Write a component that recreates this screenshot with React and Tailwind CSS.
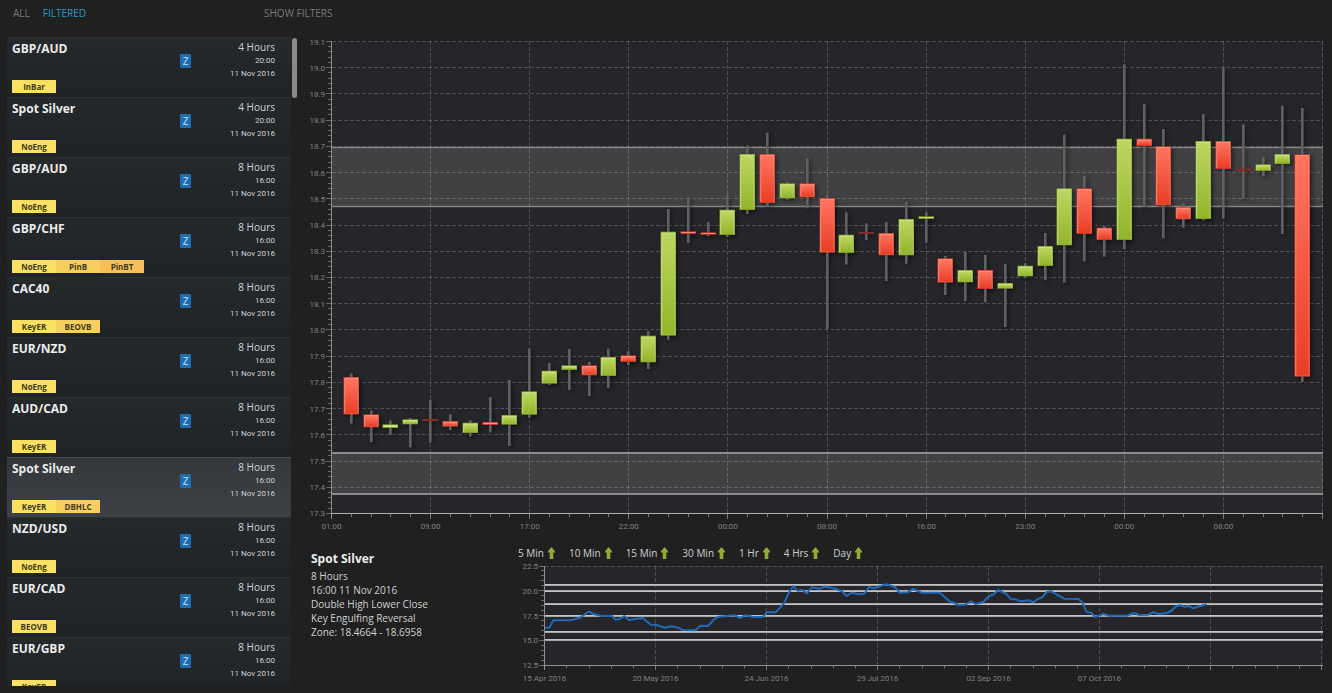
import React, { useState } from "react";

const SIGNALS = [
  { pair: "GBP/AUD", frame: "4 Hours", time: "20:00", tags: ["InBar"] },
  { pair: "Spot Silver", frame: "4 Hours", time: "20:00", tags: ["NoEng"] },
  { pair: "GBP/AUD", frame: "8 Hours", time: "16:00", tags: ["NoEng"] },
  { pair: "GBP/CHF", frame: "8 Hours", time: "16:00", tags: ["NoEng", "PinB", "PinBT"] },
  { pair: "CAC40", frame: "8 Hours", time: "16:00", tags: ["KeyER", "BEOVB"] },
  { pair: "EUR/NZD", frame: "8 Hours", time: "16:00", tags: ["NoEng"] },
  { pair: "AUD/CAD", frame: "8 Hours", time: "16:00", tags: ["KeyER"] },
  { pair: "Spot Silver", frame: "8 Hours", time: "16:00", tags: ["KeyER", "DBHLC"] },
  { pair: "NZD/USD", frame: "8 Hours", time: "16:00", tags: ["NoEng"] },
  { pair: "EUR/CAD", frame: "8 Hours", time: "16:00", tags: ["BEOVB"] },
  { pair: "EUR/GBP", frame: "8 Hours", time: "16:00", tags: ["KeyER"] },
];

const TAG_COLORS = ["bg-[#fae164]", "bg-[#f8cf5f]", "bg-[#f7bf58]"];

// [up, bodyTop, bodyBottom, wickTop, wickBottom]
const CANDLES = [
  [0, 377, 414.5, 373.5, 423.5],
  [0, 414.3, 427.3, 410.5, 442],
  [1, 424.3, 428, 420.5, 435],
  [1, 419.3, 424.3, 418, 447.3],
  [0, 419, 421, 399.7, 442.7],
  [0, 421, 426.7, 414, 430.3],
  [1, 422.7, 433, 420.3, 436.5],
  [0, 422, 425, 397, 432.5],
  [1, 415, 424.7, 380, 446],
  [1, 391.3, 414.7, 348.5, 418],
  [1, 370.7, 383.7, 363, 385],
  [1, 365.3, 370, 349, 390],
  [0, 365.3, 375.3, 362, 396],
  [1, 357, 376, 348.7, 388],
  [0, 355.3, 362, 351.3, 365],
  [1, 335.7, 362.3, 331.3, 369],
  [1, 231.7, 335.7, 209, 339.7],
  [0, 231.3, 234, 197.3, 243],
  [0, 232.3, 234.8, 222, 236],
  [1, 209.7, 235, 195, 237],
  [1, 154, 210, 145.3, 214],
  [0, 154, 203, 132.7, 206.3],
  [1, 183.3, 198.3, 181.7, 199.7],
  [0, 183.3, 197.3, 158, 208.3],
  [0, 198, 252.7, 195.3, 329.3],
  [1, 234.7, 253, 212.3, 264.7],
  [0, 232, 233.7, 223.3, 240],
  [0, 233, 255.3, 222, 281],
  [1, 219, 255.3, 201.7, 263.7],
  [1, 216.3, 219, 212.3, 243],
  [0, 258.3, 282.7, 256, 295],
  [1, 270, 282.3, 251.7, 301],
  [0, 270, 289, 255, 302.3],
  [1, 283, 288.7, 264, 327],
  [1, 265.7, 276.3, 263.3, 277.7],
  [1, 246, 266, 233, 280],
  [1, 188.3, 245.3, 134.7, 282.7],
  [0, 188.3, 234, 176, 261.3],
  [0, 227.7, 240, 226, 256.7],
  [1, 138.7, 240, 64.3, 249.3],
  [0, 138.7, 146, 104, 206.7],
  [0, 146.3, 205.3, 129, 238.3],
  [0, 207, 219.3, 203.3, 227.7],
  [1, 141, 219, 114, 220.3],
  [0, 141, 169, 67.7, 218.7],
  [0, 168.7, 170.7, 124.3, 198.7],
  [1, 164.3, 171, 157.3, 176],
  [1, 154, 164, 105.7, 234],
  [0, 154.3, 376.7, 108, 382],
];

const HOURS = ["01:00", "09:00", "17:00", "22:00", "00:00", "08:00", "16:00", "23:00", "00:00", "08:00"];
const DATES = ["15 Apr 2016", "20 May 2016", "24 Jun 2016", "29 Jul 2016", "02 Sep 2016", "07 Oct 2016"];
const FRAMES = ["5 Min", "10 Min", "15 Min", "30 Min", "1 Hr", "4 Hrs", "Day"];

const TREND =
  "545,627.7 549.3,627.7 553.3,620.3 570.7,620.3 580,617.7 588.7,611.5 593.3,614 601.7,616 611.7,615.7 615.3,619.7 620,619 624.3,616 628.7,620 642.7,618 650.7,624.7 656.7,625 664.3,627.7 671.7,626.3 678.3,627.7 682.7,630 695.3,630.3 700.3,625.7 708.3,626 714,619.3 718.3,616.7 735,615.3 740,618 745,615.3 753.3,617 762.7,617 766.7,612.3 775.7,612.3 784,603.3 789.3,592 793.3,586.3 797.3,590.7 802.7,590 806.7,593.3 811.7,587.3 820,588.7 824.7,586.7 832.7,588 841.7,591 846.7,596 851.7,592.7 858.3,594.3 864.3,593.7 869,587 874,588.3 886.3,584.3 895,587 899.3,592.7 907.3,592.3 913.3,589 921.7,592.7 940,592.7 949.3,601.3 954,602.7 958.3,605 965,604.7 971,601.3 975.7,604 983.3,602 989,596 993.3,594.7 998,590 1006,593.7 1011,599.3 1015.7,599.3 1020,601.3 1029,600.3 1033.3,602.3 1037.7,599 1042,597.7 1046.7,592 1051,591.3 1064,598.7 1078.3,599 1082.3,602.3 1086.3,611.7 1091,612.7 1095.3,617 1103.3,614 1109.3,615.7 1126.7,615.7 1134.3,613 1139,615 1148.3,614.7 1153.3,612.3 1158.3,614 1166.7,613 1171,611 1176,606.3 1180,605.3 1185,606.7 1189,606 1193.3,608.3 1199.3,606.3 1206.7,604.3";

const range = (n) => Array.from({ length: n }, (_, i) => i);

function Candle({ index, data }) {
  const [up, top, bottom, high, low] = data;
  const x = Math.floor(331.5 + 19.82 * (index + 1));
  const h = bottom - top;
  const thin = h < 2.2;
  return (
    <g filter="url(#shadow)">
      <rect x={x - 1} y={high} width="2.6" height={low - high} fill="#606060" />
      <rect x={x - 7.5} y={top} width="15.5" height={h} fill={thin ? "#8c2a26" : up ? "#7f9d28" : "#c93a2c"} />
      {!thin && (
        <rect
          x={x - 6.7}
          y={top + 0.8}
          width="14"
          height={Math.max(h - 1.8, 0.8)}
          fill={up ? "#cfe48f" : "#ff9584"}
        />
      )}
      {h > 4 && <rect x={x - 5.8} y={top + 1.8} width="12.6" height={h - 2.8} fill={up ? "url(#up)" : "url(#down)"} />}
    </g>
  );
}

function PriceChart() {
  const y = (i) => 41.5 + i * 26.22;
  const x = (i) => 331.5 + i * 99.1;
  return (
    <svg viewBox="303 37 1029 500" className="block h-auto w-full" role="img" aria-label="Price chart">
      <defs>
        <linearGradient id="up" x1="0" y1="0" x2="0" y2="1">
          <stop offset="0" stopColor="#bcd662" />
          <stop offset="1" stopColor="#93b52a" />
        </linearGradient>
        <linearGradient id="down" x1="0" y1="0" x2="0" y2="1">
          <stop offset="0" stopColor="#ff7460" />
          <stop offset="1" stopColor="#e83e26" />
        </linearGradient>
        <filter id="shadow" filterUnits="userSpaceOnUse" x="303" y="37" width="1029" height="500" colorInterpolationFilters="sRGB">
          <feDropShadow dx="2" dy="2" stdDeviation="2" floodColor="#000" floodOpacity="0.5" />
        </filter>
      </defs>
      <rect x="332" y="41" width="991" height="473" fill="#26262a" />
      <g fill="#414143">
        <rect x="332" y="147" width="991" height="60" />
        <rect x="332" y="453" width="991" height="41" />
      </g>
      <g stroke="#fff" strokeOpacity="0.19" strokeDasharray="4 2">
        {range(18).map((i) => (
          <line key={i} x1="332" x2="1323" y1={Math.floor(y(i)) + 0.5} y2={Math.floor(y(i)) + 0.5} />
        ))}
        {range(10).map((i) => (
          <line key={i} x1={Math.floor(x(i + 1)) + 0.5} x2={Math.floor(x(i + 1)) + 0.5} y1="41" y2="514" />
        ))}
      </g>
      <g fill="#8a8a8c">
        <rect x="332" y="146.8" width="991" height="1.4" />
        <rect x="332" y="205.8" width="991" height="1.4" />
        <rect x="332" y="452" width="991" height="2" />
        <rect x="332" y="493" width="991" height="2" />
      </g>
      <g stroke="#8f8f8f">
        <line x1="331.5" x2="331.5" y1="41" y2="519" />
        <line x1="331" x2="1323" y1="513.5" y2="513.5" stroke="#b0b0b0" />
        {range(91).map((i) => (
          <line
            key={i}
            x1={i % 5 ? 328 : 326}
            x2="331"
            y1={Math.floor(41.5 + i * 5.244) + 0.5}
            y2={Math.floor(41.5 + i * 5.244) + 0.5}
            strokeOpacity="0.65"
          />
        ))}
        {range(51).map((i) => (
          <line
            key={i}
            x1={Math.floor(331.5 + i * 19.82) + 0.5}
            x2={Math.floor(331.5 + i * 19.82) + 0.5}
            y1="514"
            y2={i % 5 ? 517 : 519}
            strokeOpacity="0.8"
          />
        ))}
      </g>
      <g fill="#808080" fontSize="8" className="font-[Roboto,sans-serif]">
        {range(19).map((i) => (
          <text key={i} x="325" y={y(i) + 3} textAnchor="end">
            {(19.1 - i * 0.1).toFixed(1)}
          </text>
        ))}
        {HOURS.map((t, i) => (
          <text key={i} x={x(i)} y="529" textAnchor="middle">
            {t}
          </text>
        ))}
      </g>
      {CANDLES.map((c, i) => (
        <Candle key={i} index={i} data={c} />
      ))}
    </svg>
  );
}

function TrendChart() {
  return (
    <svg viewBox="518 560 814 126" className="block h-auto w-full" role="img" aria-label="Long-term trend">
      <rect x="545" y="566" width="778" height="99" fill="#26262a" />
      <g stroke="#fff" strokeOpacity="0.19" strokeDasharray="4 2">
        <line x1="545" x2="1323" y1="566.5" y2="566.5" />
        {range(7).map((i) => (
          <line key={i} x1={655.5 + i * 111} x2={655.5 + i * 111} y1="566" y2="665" />
        ))}
      </g>
      <g fill="#a6a6a6">
        {[584, 590, 603, 615, 631, 639].map((t) => (
          <g key={t}>
            <rect x="545" y={t} width="778" height="2" />
            <rect x="545" y={t === 590 || t === 603 ? t + 1 : t} width="778" height="1" fill="#c4c4c6" />
          </g>
        ))}
      </g>
      <g stroke="#8f8f8f">
        <line x1="544.5" x2="544.5" y1="566" y2="670" />
        <line x1="544" x2="1323" y1="665.5" y2="665.5" />
        {range(21).map((i) => (
          <line
            key={i}
            x1={i % 5 ? 541 : 539}
            x2="544"
            y1={Math.floor(566 + i * 4.95) + 0.5}
            y2={Math.floor(566 + i * 4.95) + 0.5}
            strokeOpacity="0.65"
          />
        ))}
        {range(36).map((i) => (
          <line
            key={i}
            x1={Math.floor(544.6 + i * 22.2) + 0.5}
            x2={Math.floor(544.6 + i * 22.2) + 0.5}
            y1="666"
            y2={i % 5 ? 668 : 670}
            strokeOpacity="0.8"
          />
        ))}
      </g>
      <polyline points={TREND} fill="none" stroke="#1f69b6" strokeWidth="2" strokeLinejoin="round" />
      <g fill="#808080" fontSize="8" className="font-[Roboto,sans-serif]">
        {["22.5", "20.0", "17.5", "15.0", "12.5"].map((t, i) => (
          <text key={t} x="538" y={569 + i * 24.8} textAnchor="end">
            {t}
          </text>
        ))}
        {DATES.map((t, i) => (
          <text key={t} x={544.5 + i * 111} y="681" textAnchor="middle">
            {t}
          </text>
        ))}
      </g>
    </svg>
  );
}

function SignalRow({ signal, selected, onSelect }) {
  return (
    <li>
      <button
        type="button"
        onClick={onSelect}
        aria-pressed={selected}
        className={
          "flex h-[60px] w-full items-start border-t pr-4 pl-[5px] text-left " +
          (selected
            ? "border-[#45494d] bg-linear-to-b from-[#34383b] to-[#3c4146]"
            : "border-[#2b2f32] bg-linear-to-b from-[#24292b] to-[#1f2325]")
        }
      >
        <span className="flex h-[55px] w-[168px] flex-col justify-between">
          <span className="text-[12px] leading-[22px] font-bold text-[#ececec]">{signal.pair}</span>
          <span className="flex">
            {signal.tags.map((t, i) => (
              <span
                key={t}
                className={
                  "w-11 text-center text-[8px] leading-[13px] font-bold text-[#3f3a1c] " + TAG_COLORS[i]
                }
              >
                {t}
              </span>
            ))}
          </span>
        </span>
        <span className="mt-4 h-[14px] w-[11px] rounded-[1px] bg-[#1d6db3] text-center text-[10px] leading-[14px] text-[#c3e2f8]">
          Z
        </span>
        <span className="ml-auto flex flex-col pt-[2px] text-right text-[#d2d2d2]">
          <span className="text-[10px] leading-[14px]">{signal.frame}</span>
          <span className="font-[Roboto,sans-serif] text-[8px] leading-[13px]">{signal.time}</span>
          <span className="font-[Roboto,sans-serif] text-[8px] leading-[13px]">11 Nov 2016</span>
        </span>
      </button>
    </li>
  );
}

export default function App() {
  const [selected, setSelected] = useState(7);
  return (
    <div className="flex h-screen flex-col bg-[#202020] pb-[7px] font-['Open_Sans','Noto_Sans',sans-serif]">
      <header className="flex h-[37px] shrink-0 items-start pt-[5px] text-[10px] leading-4 text-[#7a7a7a]">
        <nav className="flex w-[264px] gap-[13px] pl-[13px]">
          <button type="button">ALL</button>
          <button type="button" className="text-[#2b9ac6]">
            FILTERED
          </button>
        </nav>
        <button type="button">SHOW FILTERS</button>
      </header>
      <div className="flex min-h-0 flex-1">
        <aside className="flex w-[303px] shrink-0 gap-px overflow-hidden pl-[7px]">
          <ul className="w-[284px]">
            {SIGNALS.map((s, i) => (
              <SignalRow key={i} signal={s} selected={i === selected} onSelect={() => setSelected(i)} />
            ))}
          </ul>
          <div className="mt-px h-[60px] w-[5px] rounded-full bg-[#8a8a8a]" />
        </aside>
        <main className="min-w-0 flex-1">
          <PriceChart />
          <div className="flex">
            <section className="w-[215px] shrink-0 pt-[14px] pl-2 text-[10px] leading-[14px] text-[#d0d0d0]">
              <h2 className="mb-[2px] text-[12px] leading-4 font-bold text-[#ececec]">Spot Silver</h2>
              <p>8 Hours</p>
              <p>16:00 11 Nov 2016</p>
              <p>Double High Lower Close</p>
              <p>Key Engulfing Reversal</p>
              <p>Zone: 18.4664 - 18.6958</p>
            </section>
            <section className="min-w-0 flex-1">
              <div className="flex h-[23px] items-end gap-[14px] text-[10px] leading-[14px] text-[#d0d0d0]">
                {FRAMES.map((f) => (
                  <button key={f} type="button" className="flex items-center gap-1">
                    {f}
                    <svg viewBox="0 0 7 12" className="h-3 w-[7px]" fill="#92aa35" aria-hidden="true">
                      <path d="M3.5 0 L7 4.2 V5.5 H5.3 V12 H1.7 V5.5 H0 V4.2 Z" />
                    </svg>
                  </button>
                ))}
              </div>
              <TrendChart />
            </section>
          </div>
        </main>
      </div>
    </div>
  );
}
